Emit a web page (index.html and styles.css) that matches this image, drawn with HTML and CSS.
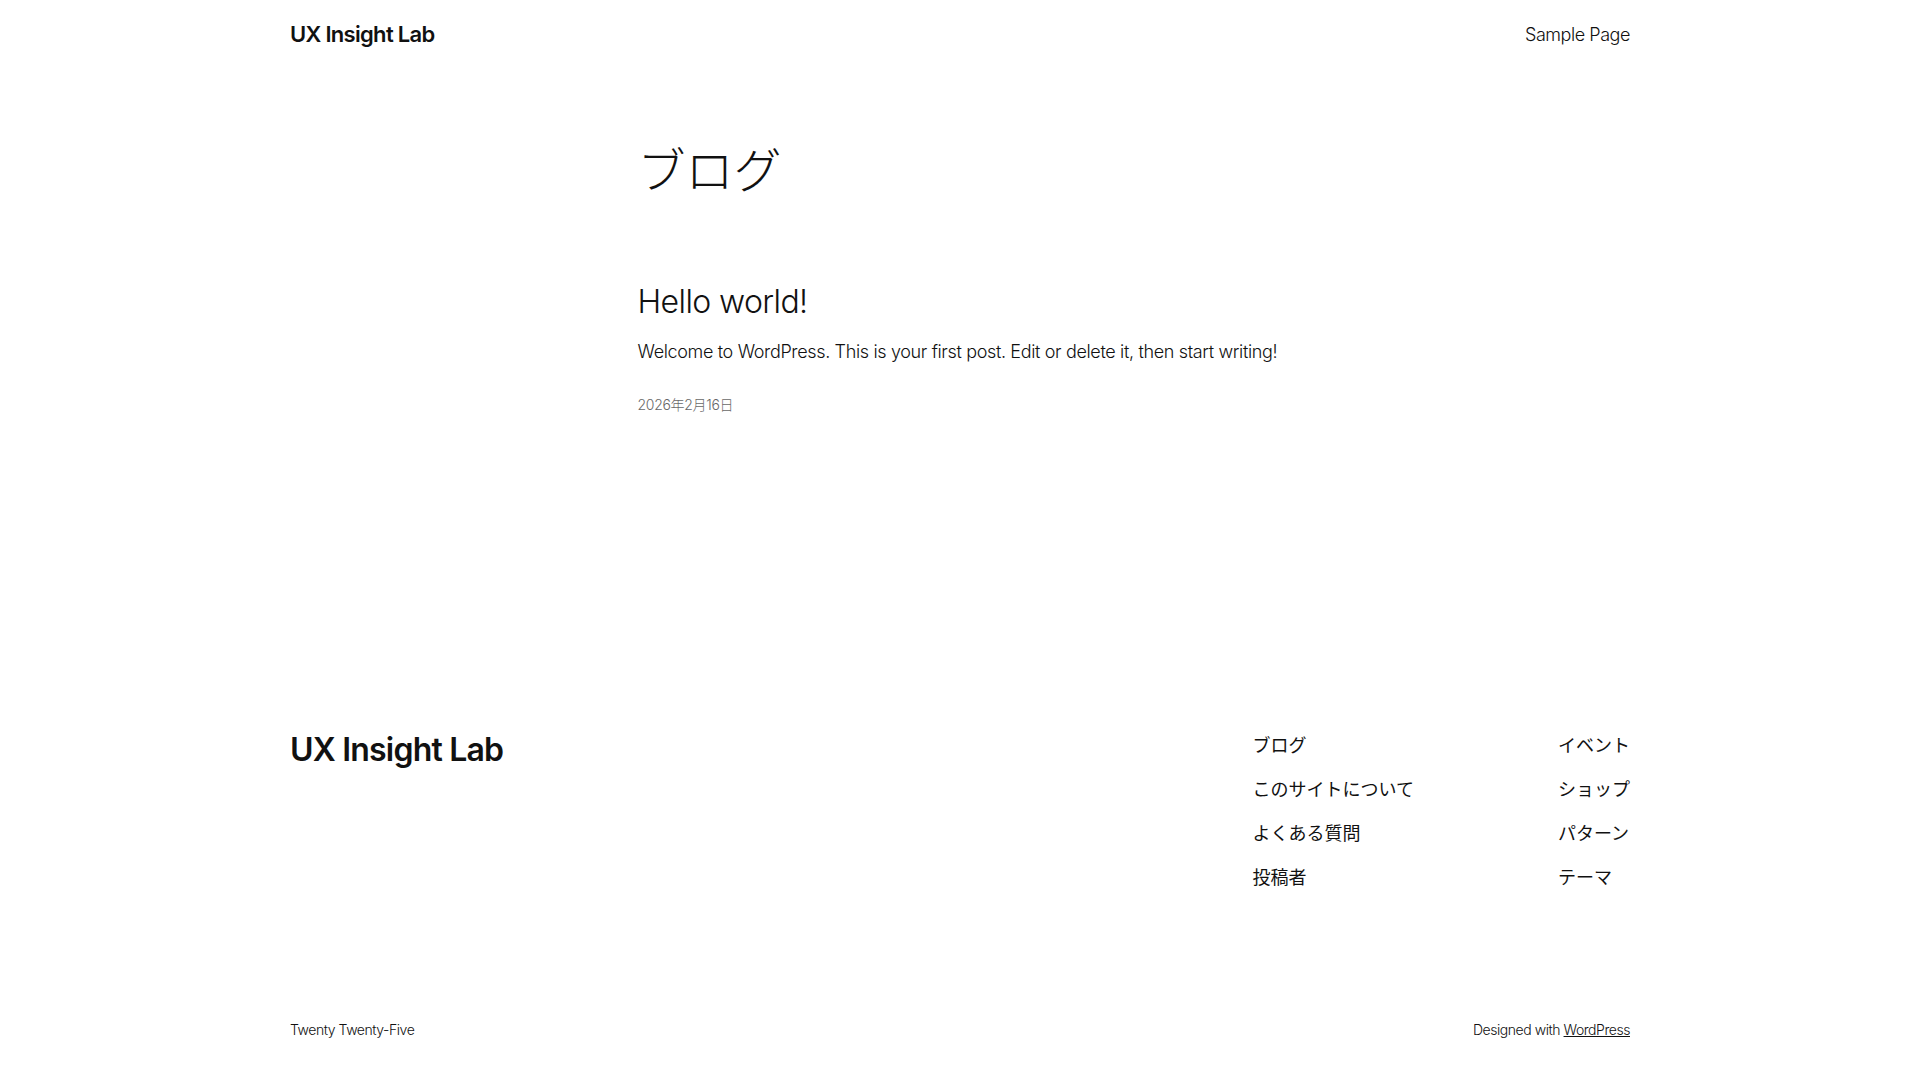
FILE: index.html
```html
<!DOCTYPE html>
<html lang="ja">
    <head>
        <meta charset="utf-8">
        <title>ブログ – UX Insight Lab</title>
        <link rel="stylesheet" href="styles.css">
    </head>
    <body>
        <header class="site-header">
            <div class="wide header-row">
                <a href="#" class="site-title">UX Insight Lab</a>
                <nav class="header-nav">
                    <a href="#">Sample Page</a>
                </nav>
            </div>
        </header>

        <main class="site-main">
            <div class="content">
                <h1 class="page-title">ブログ</h1>

                <article class="post">
                    <h2 class="post-title"><a href="#">Hello world!</a></h2>
                    <p class="post-excerpt">Welcome to WordPress. This is your first post. Edit or delete it, then start writing!</p>
                    <p class="post-date">2026年2月16日</p>
                </article>
            </div>
        </main>

        <footer class="site-footer">
            <div class="wide footer-top">
                <a href="#" class="footer-title">UX Insight Lab</a>
                <div class="footer-navs">
                    <ul class="footer-nav">
                        <li><a href="#">ブログ</a></li>
                        <li><a href="#">このサイトについて</a></li>
                        <li><a href="#">よくある質問</a></li>
                        <li><a href="#">投稿者</a></li>
                    </ul>
                    <ul class="footer-nav">
                        <li><a href="#">イベント</a></li>
                        <li><a href="#">ショップ</a></li>
                        <li><a href="#">パターン</a></li>
                        <li><a href="#">テーマ</a></li>
                    </ul>
                </div>
            </div>
            <div class="wide footer-bottom">
                <p>Twenty Twenty-Five</p>
                <p>Designed with <a href="#" class="underline">WordPress</a></p>
            </div>
        </footer>
    </body>
</html>
```

FILE: styles.css
```css
body {
    margin: 0;
    background-color: #ffffff;
    color: #111111;
    font-family: Inter, "Noto Sans CJK JP", sans-serif;
    font-weight: 300;
    font-size: 18px;
}

a {
    color: inherit;
    text-decoration: none;
}

p, h1, h2, ul {
    margin: 0;
}

.wide {
    width: 1340px;
    margin: 0 auto;
}

.content {
    width: 645px;
    margin: 0 auto;
}

/* header */
.site-header {
    padding: 19px 0 19px 0;
}

.header-row {
    display: flex;
    justify-content: space-between;
    align-items: center;
}

.site-title {
    font-size: 22px;
    font-weight: 600;
    line-height: 1.4;
    letter-spacing: -0.7px;
}

.header-nav a {
    font-size: 18px;
    font-weight: 300;
    letter-spacing: -0.45px;
}

/* main */
.page-title {
    margin-top: 73px;
    font-size: 48px;
    font-weight: 300;
    line-height: 1.2;
}

.post {
    margin-top: 84px;
}

.post-title {
    font-size: 32px;
    font-weight: 300;
    line-height: 1.2;
    letter-spacing: -0.6px;
}

.post-excerpt {
    margin-top: 16px;
    line-height: 1.6;
    letter-spacing: -0.35px;
}

.post-date {
    margin-top: 28px;
    font-size: 14px;
    line-height: 1.4;
    color: #686868;
    letter-spacing: -0.3px;
}

/* footer */
.site-footer {
    padding-top: 317px;
    padding-bottom: 38px;
}

.footer-top {
    display: flex;
    justify-content: space-between;
    align-items: flex-start;
}

.footer-title {
    font-size: 32px;
    font-weight: 600;
    line-height: 1.2;
    letter-spacing: -0.8px;
}

.footer-navs {
    display: flex;
    gap: 144px;
    padding-top: 1px;
}

.footer-nav {
    list-style: none;
    padding: 0;
    display: flex;
    flex-direction: column;
    gap: 17px;
}

.footer-nav li {
    font-size: 18px;
    line-height: 1.5;
    font-weight: 400;
}

.footer-bottom {
    margin-top: 129px;
    display: flex;
    justify-content: space-between;
    font-size: 14px;
    line-height: 1.4;
    letter-spacing: -0.45px;
}

.underline {
    text-decoration: underline;
}
```
